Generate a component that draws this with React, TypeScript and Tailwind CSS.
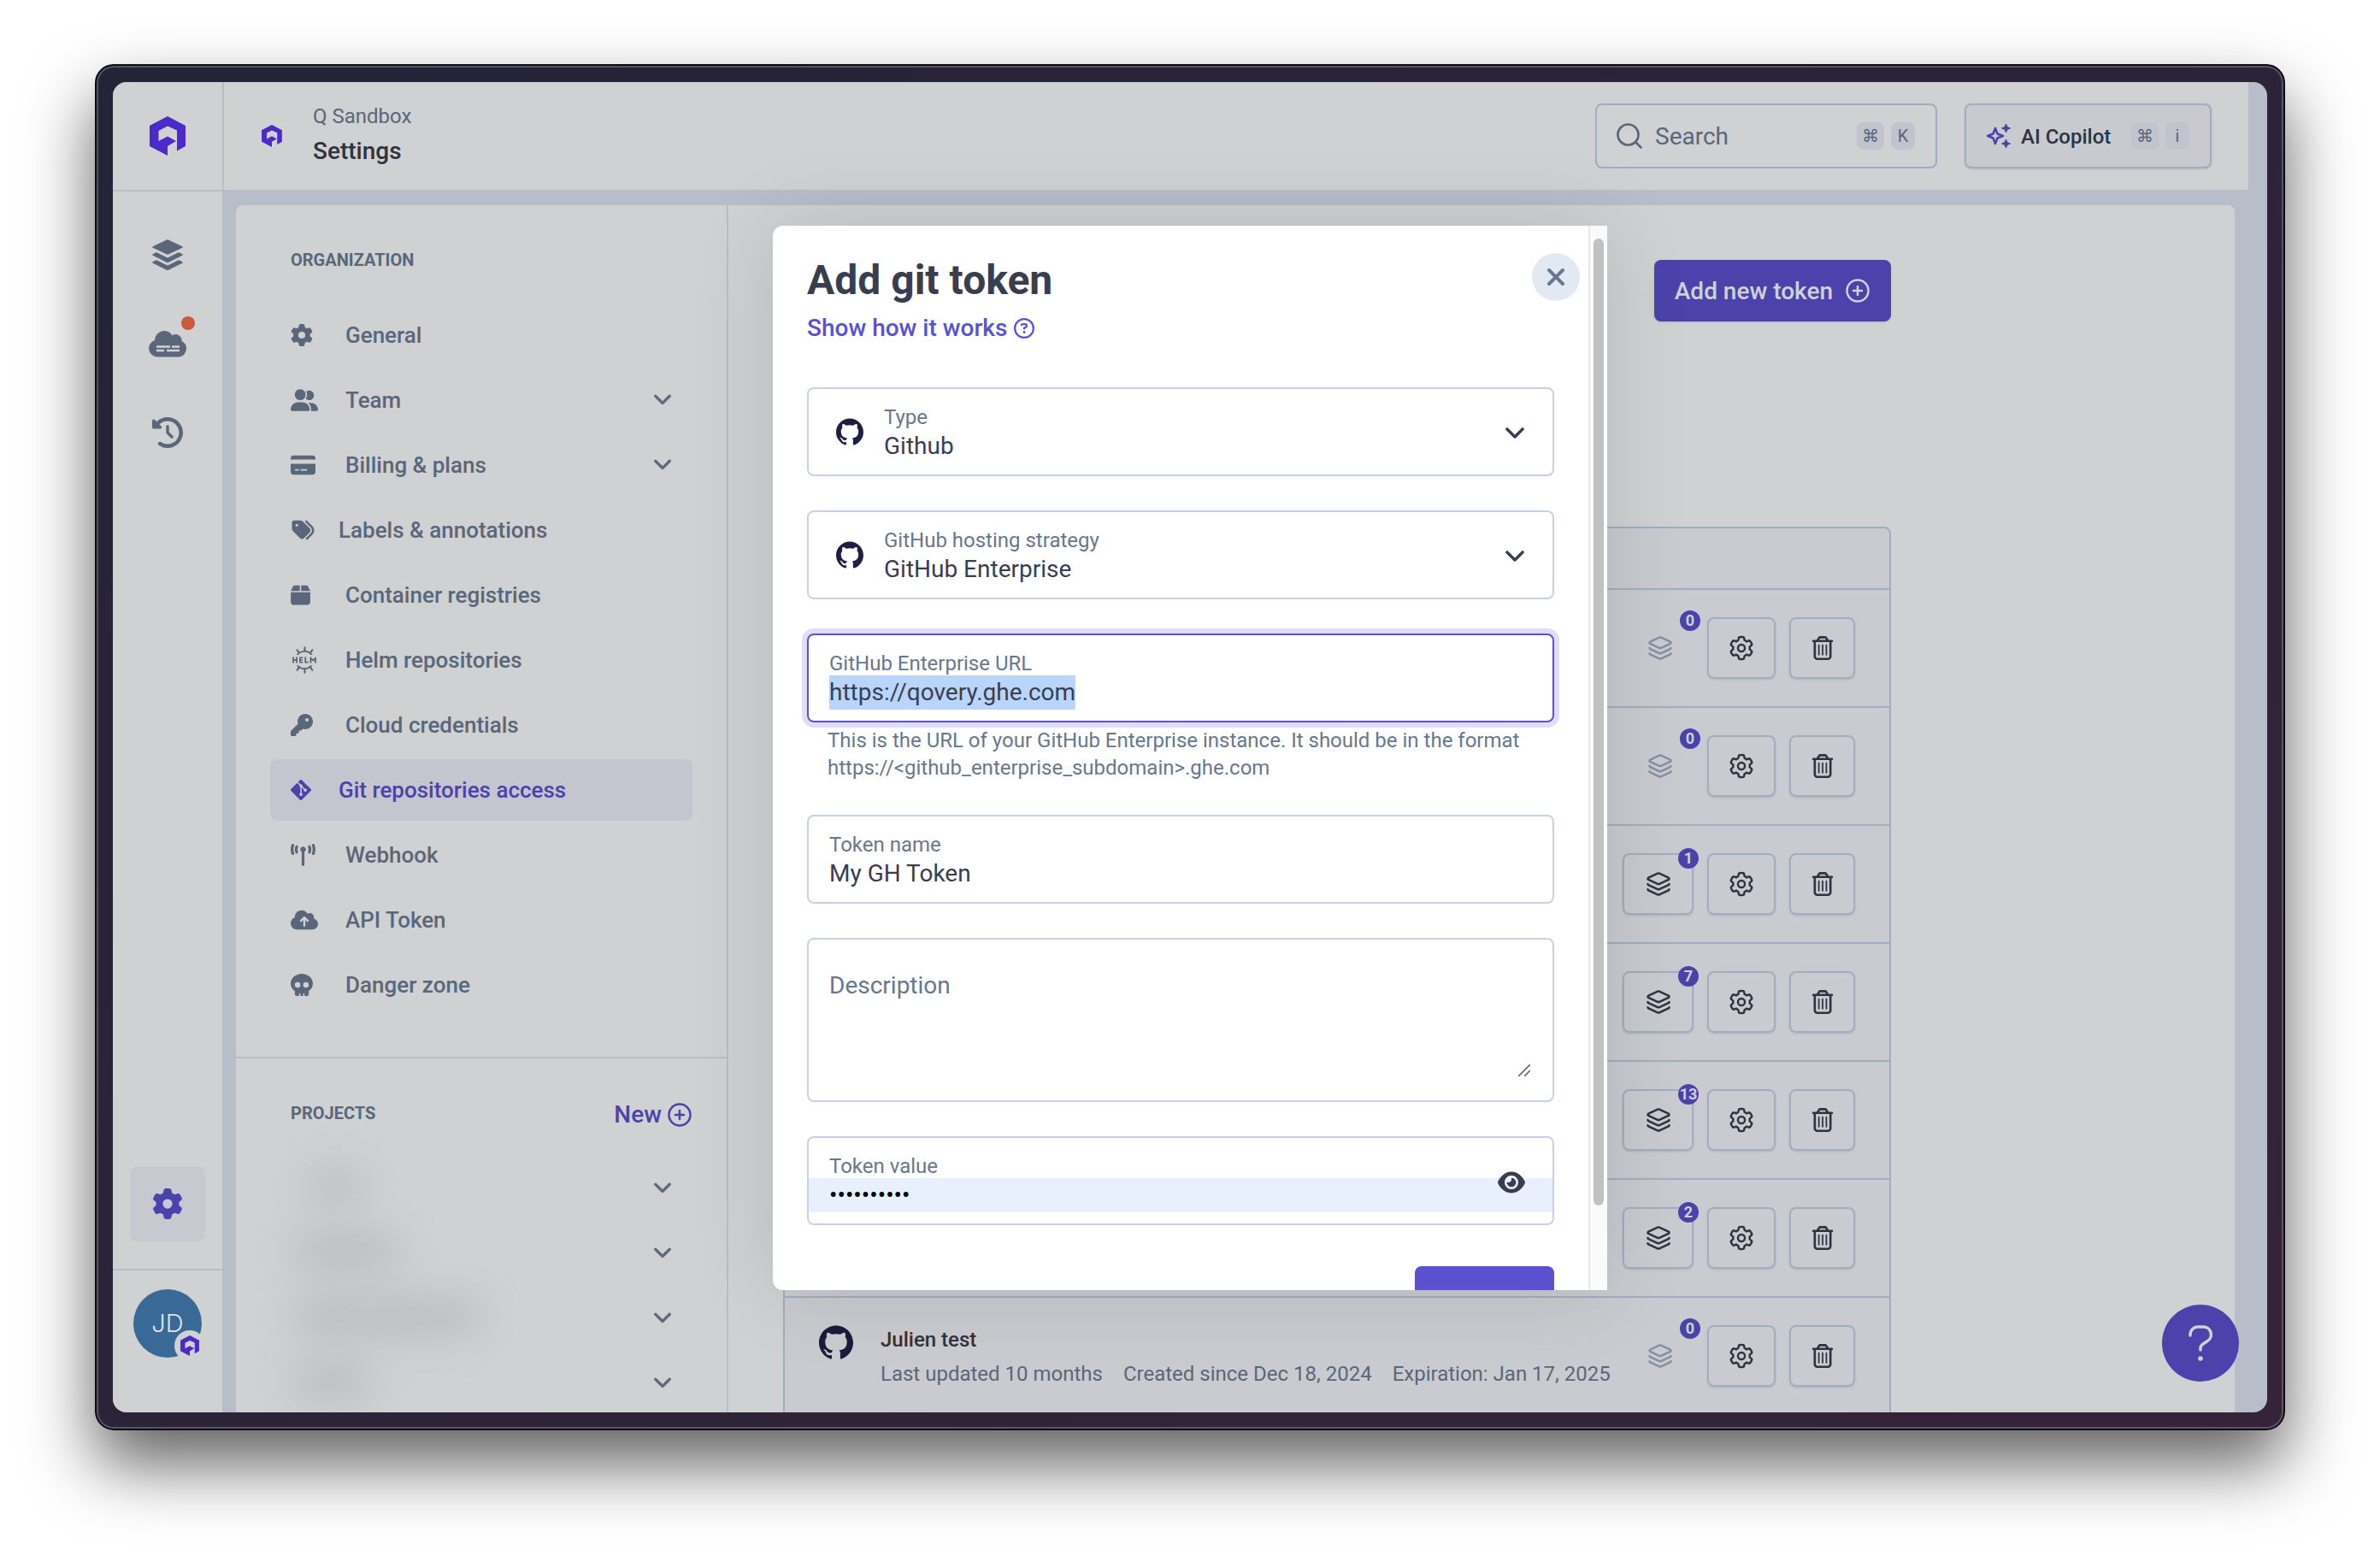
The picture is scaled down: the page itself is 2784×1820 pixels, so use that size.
import type { ReactNode } from "react";
import { useEffect, useRef } from "react";
import { CirclePlus, Layers, Search } from "lucide-react";
import { FaBox, FaChevronDown, FaClockRotateLeft, FaCloudArrowUp, FaCreditCard, FaEye, FaGear, FaGitAlt, FaKey, FaRegCircleQuestion, FaRegTrashCan, FaSkull, FaTags, FaTowerBroadcast, FaUserGroup, FaXmark } from "react-icons/fa6";
import { SiGithub, SiHelm } from "react-icons/si";

const navItems = [
    { label: "General", icon: <FaGear className="size-[26px]" /> },
    { label: "Team", icon: <FaUserGroup className="h-[26px] w-8" />, expandable: true },
    { label: "Billing & plans", icon: <FaCreditCard className="h-[26px] w-[29px]" />, expandable: true },
    { label: "Labels & annotations", icon: <FaTags className="h-[26px] w-[29px]" />, tight: true },
    { label: "Container registries", icon: <FaBox className="h-[26px] w-[23px]" /> },
    { label: "Helm repositories", icon: <SiHelm className="size-8" /> },
    { label: "Cloud credentials", icon: <FaKey className="size-[26px]" /> },
    { label: "Git repositories access", icon: <FaGitAlt className="h-7 w-6" />, tight: true, active: true },
    { label: "Webhook", icon: <FaTowerBroadcast className="h-[26px] w-[29px]" /> },
    { label: "API Token", icon: <FaCloudArrowUp className="h-[26px] w-8" /> },
    { label: "Danger zone", icon: <FaSkull className="size-[26px]" /> },
];

const projectWidths = ["ml-11 w-16", "ml-6 w-32", "ml-6 w-56", "ml-6 w-24"];

const tokenCounts = [0, 0, 1, 7, 13, 2];

function Logo({ className }: { className: string }) {
    return (
        <svg viewBox="0 0 42 46" className={className} fill="#4c29c9">
            <path d="M21 0 42 11V35L32 40.500V16.500L21 11.500 10.500 17V29L21 23.500 31 29 21 35V46L0 35V11Z" />
        </svg>
    );
}

function Kbd({ children }: { children: ReactNode }) {
    return (
        <kbd className="flex h-8 min-w-7 items-center justify-center rounded-lg bg-[#c1c4ce] px-1.5 font-['Roboto',sans-serif] text-[20px] font-normal text-[#5a667a]">
            {children}
        </kbd>
    );
}

function TokenActions({ count }: { count: number }) {
    return (
        <div className="flex shrink-0 items-center gap-4 pr-10">
            <button
                aria-label="Linked services"
                disabled={count === 0}
                className={
                    count === 0
                        ? "relative flex h-[72px] w-[79px] items-center justify-center text-[#8490a5]"
                        : "relative flex h-[72px] w-[83px] items-center justify-center rounded-lg border-2 border-[#a1adc2] text-[#2e3241] shadow-sm"
                }
            >
                <Layers className="size-[30px]" />
                <span className="absolute -top-2 -right-2 flex size-6 items-center justify-center rounded-full bg-[#4b43ab] text-[18px] leading-6 font-bold text-[#cfd1d2]">
                    {count}
                </span>
            </button>
            <button aria-label="Token settings" className="flex h-[72px] w-20 items-center justify-center rounded-lg border-2 border-[#a1adc2] text-[#2e3241] shadow-sm">
                <FaGear className="size-[26px] overflow-visible fill-none stroke-current stroke-48" />
            </button>
            <button aria-label="Delete token" className="flex h-[72px] w-[77px] items-center justify-center rounded-lg border-2 border-[#a1adc2] text-[#2e3241] shadow-sm">
                <FaRegTrashCan className="size-7" />
            </button>
        </div>
    );
}

function SelectField({ id, label, value }: { id: string; label: string; value: string }) {
    return (
        <div className="flex h-[104px] items-center rounded-lg border-2 border-[#c8d2e6] pr-8 pl-8">
            <SiGithub className="size-8 shrink-0 text-[#1f1f42]" />
            <div className="ml-6 flex h-full flex-1 flex-col pt-[19px]">
                <label htmlFor={id} className="text-[24px] leading-7 text-[#67778e]">{label}</label>
                <select id={id} className="h-10 w-full appearance-none bg-transparent p-0 text-[28px] leading-10 text-[#383e50] outline-none">
                    <option>{value}</option>
                </select>
            </div>
            <FaChevronDown className="size-6 shrink-0 stroke-current stroke-16 text-[#383e50]" />
        </div>
    );
}

function Modal() {
    const urlRef = useRef<HTMLInputElement>(null);

    useEffect(() => {
        urlRef.current?.focus();
        urlRef.current?.select();
    }, []);

    return (
        <div role="dialog" aria-label="Add git token" className="absolute top-[168px] left-1/2 flex h-[1245px] w-[976px] -translate-x-1/2 overflow-hidden rounded-l-xl bg-white shadow-[0_0_100px_rgba(0,0,0,0.12)]">
            <div className="relative min-w-0 flex-1 px-10 pt-[34px]">
                <button aria-label="Close" className="absolute top-8 right-2.5 flex size-14 items-center justify-center rounded-full bg-[#e2e9f3] text-[#67778e]">
                    <FaXmark className="size-8" />
                </button>
                <h2 className="text-[48px] leading-[60px] font-bold text-[#383e50]">Add git token</h2>
                <a href="#" className="mt-1.5 flex items-center gap-2 text-[28px] leading-10 font-medium text-[#5b50d6]">
                    Show how it works
                    <FaRegCircleQuestion className="size-6" />
                </a>
                <form className="mt-[49px] flex flex-col gap-10">
                    <SelectField id="type" label="Type" value="Github" />
                    <SelectField id="hosting" label="GitHub hosting strategy" value="GitHub Enterprise" />
                    <div>
                        <div className="flex h-[104px] flex-col rounded-lg border-2 border-[#5b50d6] px-6 pt-[19px] ring-6 ring-[#e0dcfa]">
                            <label htmlFor="url" className="text-[24px] leading-7 text-[#67778e]">GitHub Enterprise URL</label>
                            <input id="url" ref={urlRef} defaultValue="https://qovery.ghe.com" className="h-10 text-[28px] leading-10 text-[#383e50] outline-none selection:bg-[#b9d5fb] selection:text-[#383e50]" />
                        </div>
                        <p className="mt-[5px] -mb-px px-6 text-[24px] leading-8 text-[#67778e]">
                            This is the URL of your GitHub Enterprise instance. It should be in the format https://&lt;github_enterprise_subdomain&gt;.ghe.com
                        </p>
                    </div>
                    <div className="flex h-[104px] flex-col rounded-lg border-2 border-[#c8d2e6] px-6 pt-[19px]">
                        <label htmlFor="name" className="text-[24px] leading-7 text-[#67778e]">Token name</label>
                        <input id="name" defaultValue="My GH Token" className="h-10 text-[28px] leading-10 text-[#383e50] outline-none" />
                    </div>
                    <div className="relative h-48 rounded-lg border-2 border-[#c8d2e6] px-6 pt-[34px]">
                        <textarea aria-label="Description" placeholder="Description" className="block h-32 w-full resize-none text-[28px] leading-10 outline-none placeholder:text-[#67778e]" />
                        <svg viewBox="0 0 14 14" className="absolute right-[26px] bottom-7 size-3.5" stroke="#555" strokeWidth="1.500">
                            <path d="M0 14 14 0M7 14l7-7" />
                        </svg>
                    </div>
                    <div className="relative flex h-[104px] flex-col rounded-lg border-2 border-[#c8d2e6] pt-[19px]">
                        <label htmlFor="value" className="px-6 text-[24px] leading-7 text-[#67778e]">Token value</label>
                        <input id="value" type="password" defaultValue="0123456789" className="h-10 bg-[#e8f0fe] px-6 text-[28px] leading-10 text-black outline-none" />
                        <button type="button" aria-label="Show token" className="absolute top-9 right-8 text-[#383e50]">
                            <FaEye className="h-8 w-8" />
                        </button>
                    </div>
                    <button type="submit" aria-label="Create" className="mt-2 h-[72px] w-[163px] self-end rounded-lg bg-[#5b50d0]" />
                </form>
            </div>
            <div className="w-[22px] shrink-0 border-l-2 border-[#e8e8e8] bg-[#fafafa] pt-[15px] pl-1">
                <div className="h-[1131px] w-3 rounded-full bg-[#c1c1c1]" />
            </div>
        </div>
    );
}

export default function App() {
    return (
        <div className="flex h-screen flex-col overflow-hidden bg-white px-[111px] pt-[75px] pb-[147px] font-['Roboto',sans-serif]">
            <div className="min-h-0 flex-1 rounded-[22px] border-2 border-[#0c0b12] bg-linear-to-br from-[#242337] to-[#352339] p-[19px] shadow-[inset_0_0_0_2px_rgba(255,255,255,0.22),0_40px_80px_rgba(0,0,0,0.62)]">
                <div className="relative flex h-full overflow-hidden rounded-2xl bg-[#b7bdc9] text-[#5a667a]">
                    <aside className="flex w-32 shrink-0 flex-col items-center bg-[#cfd1d2]">
                        <div className="flex h-32 w-full items-center justify-center border-b-2 border-[#b7bdc9]">
                            <Logo className="h-[46px] w-[42px]" />
                        </div>
                        <nav className="flex flex-1 flex-col gap-4 pt-[30px] pb-8">
                            <a href="#" aria-label="Environments" className="flex size-[88px] items-center justify-center">
                                <svg viewBox="0 0 36 36" className="size-9" fill="currentColor" stroke="currentColor" strokeWidth="1.500" strokeLinejoin="round">
                                    <path d="M18 1 35 9 18 17 1 9ZM1 18l4-2 13 6.500L31 16l4 2-17 8.500ZM1 27l4-2 13 6.500L31 25l4 2-17 8.500Z" />
                                </svg>
                            </a>
                            <a href="#" aria-label="Clusters" className="relative flex size-[88px] items-center justify-center">
                                <svg viewBox="0 0 45 32" className="h-8 w-[45px]">
                                    <path fill="currentColor" d="M10 31.500a10 10 0 0 1-3-19.500A11 11 0 0 1 27.500 6.500a7 7 0 0 1 11 6.500A9.800 9.800 0 0 1 35.500 31.500Z" />
                                    <path stroke="#cfd1d2" strokeWidth="2.500" d="M9 19.500h16m2 0h9M9 24h9m3 0h15" />
                                </svg>
                                <span className="absolute top-3 right-3 size-4 rounded-full bg-[#cb593c]" />
                            </a>
                            <a href="#" aria-label="Audit logs" className="flex size-[88px] items-center justify-center">
                                <FaClockRotateLeft className="size-9" />
                            </a>
                            <a href="#" aria-label="Settings" className="mt-auto flex size-[88px] items-center justify-center rounded-lg bg-[#c8c9d0] text-[#4b43ab]">
                                <FaGear className="size-9" />
                            </a>
                        </nav>
                        <div className="flex h-[168px] w-full justify-center border-t-2 border-[#b7bdc9] pt-[22px]">
                            <button aria-label="Account" className="relative flex size-20 items-center justify-center rounded-full bg-[#386997] font-['Inter',sans-serif] text-[29px] font-light text-[#e0e4e8]">
                                JD
                                <span className="absolute -right-1 -bottom-1 flex size-9 items-center justify-center rounded-full bg-[#cfd1d2]">
                                    <Logo className="h-6 w-[22px]" />
                                </span>
                            </button>
                        </div>
                    </aside>
                    <div className="flex min-w-0 flex-1 flex-col">
                        <header className="mr-[22px] flex h-[126px] shrink-0 items-center border-l-2 border-[#b7bdc9] bg-[#cfd1d2] pr-[43px] pl-11">
                            <Logo className="h-[26px] w-6" />
                            <div className="ml-9">
                                <p className="text-[24px] leading-9">Q Sandbox</p>
                                <p className="text-[28px] leading-[46px] font-medium text-[#2e3241]">Settings</p>
                            </div>
                            <button className="ml-auto flex h-[76px] w-[400px] items-center gap-2 rounded-lg border-2 border-[#a1adc2] pr-6 pl-5 text-[28px]">
                                <Search className="size-9" strokeWidth={1.8} />
                                <span className="mr-auto ml-1 pt-0.5">Search</span>
                                <Kbd>⌘</Kbd>
                                <Kbd>K</Kbd>
                            </button>
                            <button className="ml-8 flex h-[76px] w-[289px] items-center gap-2 rounded-lg border-2 border-[#a1adc2] bg-[#c8cacf] pr-6 pl-6 text-[24px] font-medium text-[#2e3241] shadow-sm">
                                <svg viewBox="0 0 28 28" className="size-7 text-[#4b43ab]" fill="none" stroke="currentColor" strokeWidth="2.500" strokeLinejoin="round">
                                    <path d="M10 5l2.500 6.500L19 14l-6.500 2.500L10 23l-2.500-6.500L1 14l6.500-2.500Z" />
                                    <path fill="currentColor" strokeWidth="1" d="M22.500 0l1.500 3.500 3.500 1.500-3.500 1.500-1.500 3.500-1.500-3.500-3.500-1.500 3.500-1.500ZM22.500 18l1.500 3.500 3.500 1.500-3.500 1.500-1.500 3.500-1.500-3.500-3.500-1.500 3.500-1.500Z" />
                                </svg>
                                <span className="mr-auto ml-1 pt-0.5">AI Copilot</span>
                                <Kbd>⌘</Kbd>
                                <Kbd>i</Kbd>
                            </button>
                        </header>
                        <div className="mt-[18px] mr-[38px] ml-4 flex min-h-0 flex-1 overflow-hidden rounded-t-lg bg-[#cfd1d2]">
                            <aside className="w-[576px] shrink-0 border-r-2 border-[#b7bdc9]">
                                <div className="border-b-2 border-[#b7bdc9] px-10 pt-12 pb-12">
                                    <h2 className="mb-9 px-6 text-[20px] leading-8 font-bold">ORGANIZATION</h2>
                                    <nav className="flex flex-col gap-1">
                                        {navItems.map((item) => (
                                            <a
                                                key={item.label}
                                                href="#"
                                                className={
                                                    item.active
                                                        ? "flex h-[72px] items-center rounded-lg bg-[#c5c5cf] px-6 text-[26px] font-medium text-[#4b43ab]"
                                                        : "flex h-[72px] items-center px-6 text-[26px] font-medium"
                                                }
                                            >
                                                <span className={item.tight ? "mr-6 flex w-8" : "mr-8 flex w-8"}>{item.icon}</span>
                                                {item.label}
                                                {item.expandable && <FaChevronDown className="mb-1 ml-auto size-[22px] stroke-current stroke-16" />}
                                            </a>
                                        ))}
                                    </nav>
                                </div>
                                <div className="px-10 pt-[50px]">
                                    <div className="mb-8 flex items-center justify-between pl-6">
                                        <h2 className="-mt-1 text-[20px] leading-8 font-bold">PROJECTS</h2>
                                        <button className="flex items-center gap-1.5 text-[28px] leading-8 font-medium text-[#4b43ab]">
                                            New <CirclePlus className="size-[30px]" />
                                        </button>
                                    </div>
                                    {projectWidths.map((width) => (
                                        <div key={width} className="mb-1 flex h-[72px] items-center justify-between pr-6">
                                            <div className={`${width} h-10 rounded-full bg-[#a9adb3] opacity-60 blur-xl`} />
                                            <FaChevronDown className="size-[22px] stroke-current stroke-16" />
                                        </div>
                                    ))}
                                </div>
                            </aside>
                            <main className="flex-1 px-16 pt-16">
                                <div className="max-w-[1296px]">
                                    <button className="ml-auto flex h-[72px] items-center gap-3.5 rounded-lg bg-[#4b43ab] px-6 text-[28px] font-medium text-[#cfd1d2] shadow-sm">
                                        <span className="pt-0.5">Add new token</span> <CirclePlus className="size-[30px]" />
                                    </button>
                                    <section className="mt-60 rounded-t-lg border-2 border-[#a1adc2] bg-[#c9cbd0]">
                                        <div className="h-[70px]" />
                                        {tokenCounts.map((count, i) => (
                                            <div key={i} className="flex h-[138px] items-center justify-end border-t-2 border-[#a1adc2]">
                                                <TokenActions count={count} />
                                            </div>
                                        ))}
                                        <div className="flex h-[138px] items-center border-t-2 border-[#a1adc2]">
                                            <SiGithub className="mb-8 ml-10 size-10 shrink-0 text-[#1c1c3a]" />
                                            <div className="mr-auto ml-8 pt-0.5">
                                                <h3 className="text-[24px] leading-10 font-medium text-[#2e3241]">Julien test</h3>
                                                <p className="flex gap-6 text-[24px] leading-10 whitespace-nowrap">
                                                    <span>Last updated 10 months</span>
                                                    <span>Created since Dec 18, 2024</span>
                                                    <span>Expiration: Jan 17, 2025</span>
                                                </p>
                                            </div>
                                            <TokenActions count={0} />
                                        </div>
                                    </section>
                                </div>
                            </main>
                        </div>
                    </div>
                    <Modal />
                    <button aria-label="Help" className="absolute right-[33px] bottom-9 flex size-[90px] items-center justify-center rounded-full bg-[#4b43ab]">
                        <svg viewBox="0 0 28 42" className="h-[42px] w-7" fill="none" stroke="#cfd1d2" strokeWidth="3.500" strokeLinecap="round">
                            <path d="M2 12V11a9 9 0 0 1 9-9h6a9 9 0 0 1 4.500 17l-4.500 3a6 6 0 0 0-3 5v2" />
                            <circle cx="14" cy="39" r="2.800" fill="#cfd1d2" stroke="none" />
                        </svg>
                    </button>
                </div>
            </div>
        </div>
    );
}
